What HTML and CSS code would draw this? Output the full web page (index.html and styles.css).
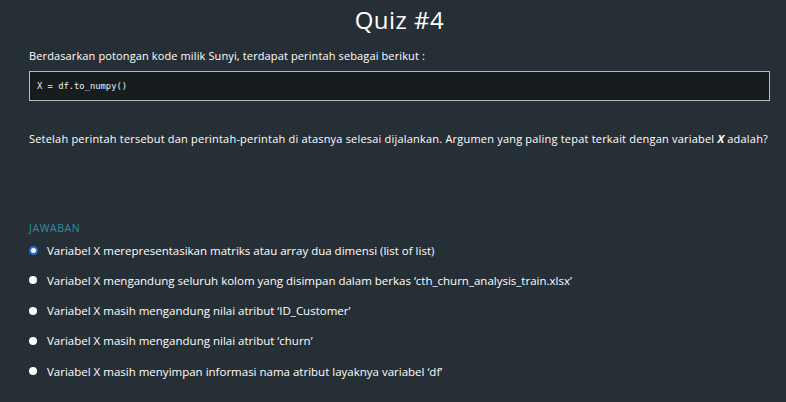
FILE: index.html
```html
<!DOCTYPE html>
<html lang="id">
<head>
<meta charset="utf-8">
<link rel="stylesheet" href="styles.css">
</head>
<body>
<main class="quiz">
  <h1 class="title">Quiz #4</h1>
  <p class="intro">Berdasarkan potongan kode milik Sunyi, terdapat perintah sebagai berikut :</p>
  <pre class="code">X = df.to_numpy()</pre>
  <p class="question">Setelah perintah tersebut dan perintah-perintah di atasnya selesai dijalankan. Argumen yang paling tepat terkait dengan variabel <b><i>X</i></b> adalah?</p>
  <div class="answers">
    <div class="label">JAWABAN</div>
    <label class="opt"><span class="radio checked"></span>Variabel X merepresentasikan matriks atau array dua dimensi (list of list)</label>
    <label class="opt"><span class="radio"></span>Variabel X mengandung seluruh kolom yang disimpan dalam berkas ‘cth_churn_analysis_train.xlsx’</label>
    <label class="opt"><span class="radio"></span>Variabel X masih mengandung nilai atribut ‘ID_Customer’</label>
    <label class="opt"><span class="radio"></span>Variabel X masih mengandung nilai atribut ‘churn’</label>
    <label class="opt"><span class="radio"></span>Variabel X masih menyimpan informasi nama atribut layaknya variabel ‘df’</label>
  </div>
</main>
</body>
</html>
```
FILE: styles.css
```css
html, body {
  margin: 0;
  padding: 0;
  background: #272f36;
}
body {
  font-family: "Open Sans", "Noto Sans", sans-serif;
  color: #ffffff;
  width: 786px;
  height: 402px;
  overflow: hidden;
}
.quiz {
  padding: 0 16px 0 29px;
}
.title {
  margin: 0;
  padding-top: 5px;
  height: 36px;
  text-align: center;
  font-size: 24px;
  font-weight: 500;
  line-height: 30px;
  letter-spacing: 0.5px;
}
.intro {
  margin: 7px 0 0;
  font-size: 11px;
  line-height: 16px;
  letter-spacing: 0.12px;
}
.code {
  margin: 7px 0 0;
  height: 30px;
  box-sizing: border-box;
  border: 1px solid #b8bcbe;
  background: #171c1e;
  font-family: "DejaVu Sans Mono", monospace;
  font-size: 8.8px;
  line-height: 28px;
  padding: 0 0 0 7px;
  color: #f0f0f0;
  width: 741px;
}
.question {
  margin: 30px 0 0;
  font-size: 11px;
  line-height: 16px;
  letter-spacing: 0.2px;
  white-space: nowrap;
}
.answers {
  margin-top: 74px;
}
.label {
  font-size: 10.5px;
  line-height: 14px;
  color: #2b8ea8;
  letter-spacing: 0.6px;
}
.opt {
  display: flex;
  align-items: center;
  height: 30.25px;
  font-size: 11.5px;
  letter-spacing: 0;
  white-space: nowrap;
}
.radio {
  width: 8px;
  height: 8px;
  border-radius: 50%;
  background: #ffffff;
  margin: 0 10px 0 0;
  box-sizing: border-box;
  flex: none;
}
.radio.checked {
  border: 2px solid #1a73e8;
  background: #ffffff;
  width: 9px;
  height: 9px;
  margin-right: 9px;
}
```
